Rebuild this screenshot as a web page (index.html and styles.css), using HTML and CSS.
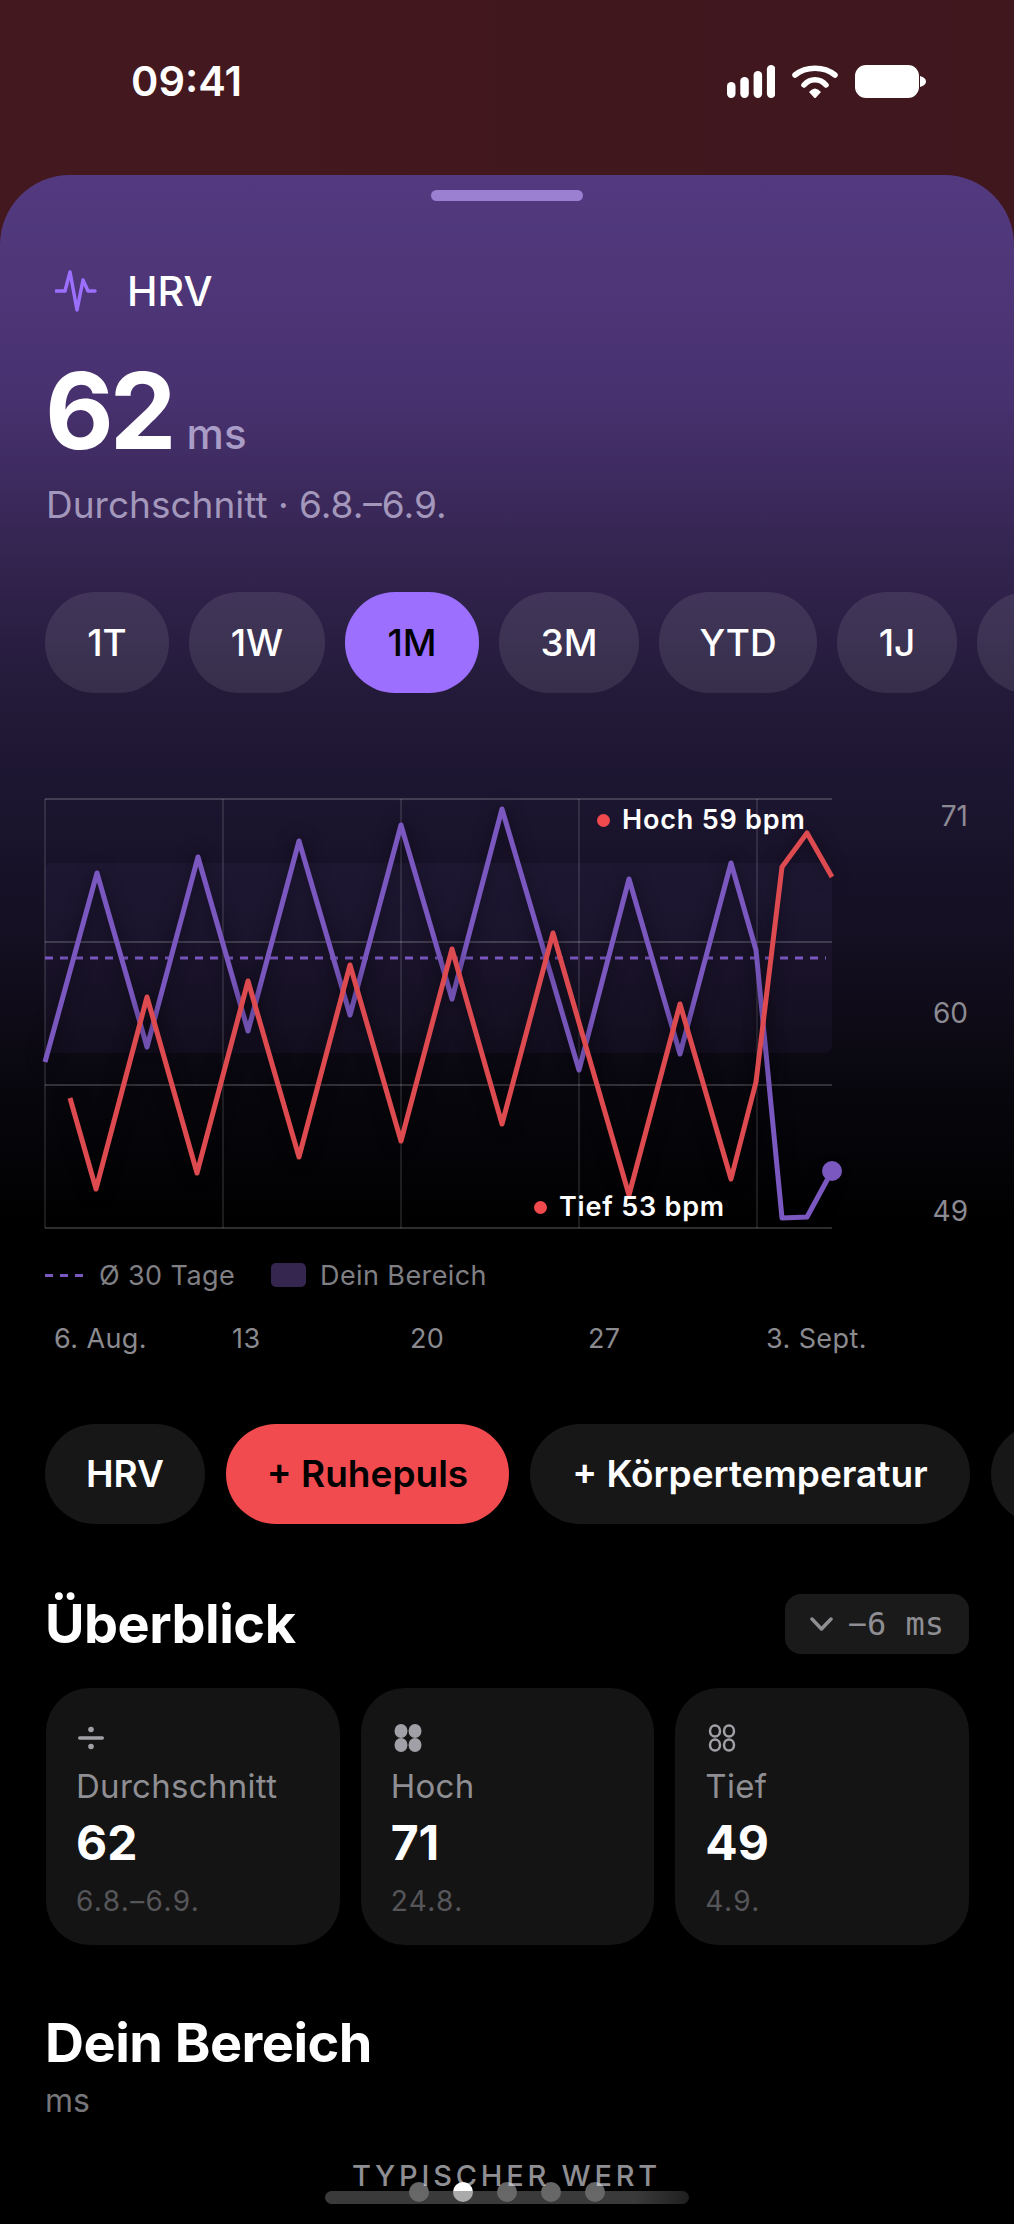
FILE: index.html
```html
<!DOCTYPE html>
<html lang="de">
<head>
    <meta charset="UTF-8">
    <meta name="viewport" content="width=device-width, initial-scale=1.0">
    <title>HRV</title>
    <link rel="stylesheet" href="styles.css">
</head>
<body>
    <div class="top">
        <div class="status-bar">
            <span class="time">09:41</span>
            <div class="status-icons">
                <svg width="48" height="33" viewBox="0 0 48 33" fill="#fff"><rect x="0" y="17" width="8.5" height="16" rx="4.2"/><rect x="13.3" y="12" width="8.5" height="21" rx="4.2"/><rect x="26.6" y="6" width="8.5" height="27" rx="4.2"/><rect x="39.9" y="0" width="8.5" height="33" rx="4.2"/></svg>
                <svg width="46" height="34" viewBox="0 0 46 34" fill="none" stroke="#fff" stroke-width="5.5" stroke-linecap="round"><path d="M3 10C14 1 32 1 43 10"/><path d="M12 20C18 13 28 13 34 20"/><path d="M17 27Q23 20 29 27L24 32.5Q23 33.5 22 32.5Z" fill="#fff" stroke="none"/></svg>
                <svg width="71" height="33" viewBox="0 0 71 33" fill="#fff"><rect x="0" y="0" width="64" height="33" rx="11"/><path d="M65 11C69 12 71 14 71 16.5C71 19 69 21 65 22Z"/></svg>
            </div>
        </div>

        <div class="sheet">
            <div class="handle"></div>
            <div class="metric-title">
                <svg width="42" height="42" viewBox="0 0 42 42" fill="none" stroke="#9d6fff" stroke-width="3.5" stroke-linecap="round" stroke-linejoin="round"><path d="M1 21H10L15 2L22 40L28 10L33 21H40"/></svg>
                <span>HRV</span>
            </div>
            <div class="metric-value">
                <span class="big">62</span>
                <span class="unit">ms</span>
            </div>
            <p class="metric-sub">Durchschnitt · 6.8.–6.9.</p>

            <div class="pills">
                <div class="pill">1T</div>
                <div class="pill">1W</div>
                <div class="pill active">1M</div>
                <div class="pill">3M</div>
                <div class="pill">YTD</div>
                <div class="pill">1J</div>
                <div class="pill"></div>
            </div>

            <div class="chart">
                <svg class="plot" width="880" height="440" viewBox="45 799 880 440" fill="none">
                    <rect x="45" y="863" width="787" height="190" rx="6" fill="#a67dff" fill-opacity="0.05"/>
                    <g stroke="#fff" stroke-opacity="0.24" stroke-width="1.5">
                        <path d="M45 799H832M45 942H832M45 1085H832M45 1228H832"/>
                        <path d="M45 799V1228M223 799V1228M401 799V1228M579 799V1228M757 799V1228" stroke-opacity="0.15"/>
                    </g>
                    <path d="M45 958H826" stroke="#7a58c0" stroke-width="3" stroke-dasharray="8 7"/>
                    <path class="line" stroke="#7a58c0" d="M45 1062L97 873L147 1047L198 857L248 1031L299 841L350 1015L401 825L452 999L502 809L579 1070L629 879L680 1054L731 863L756 950L782 1218L807 1217L832 1171"/>
                    <circle cx="832" cy="1171" r="10" fill="#7a58c0"/>
                    <path class="line" stroke="#dd4a4f" d="M70 1098L96 1189L147 997L197 1173L248 981L299 1157L350 965L401 1141L452 949L502 1124L553 933L629 1195L680 1004L731 1179L756 1082L782 867L807 833L832 877"/>
                </svg>
                <div class="tag tag-high"><i></i>Hoch 59 bpm</div>
                <div class="tag tag-low"><i></i>Tief 53 bpm</div>
                <div class="y-label y-top">71</div>
                <div class="y-label y-mid">60</div>
                <div class="y-label y-low">49</div>
            </div>

            <div class="legend">
                <span class="dashes"><i></i><i></i><i></i></span>
                <span>Ø 30 Tage</span>
                <span class="swatch"></span>
                <span>Dein Bereich</span>
            </div>

            <div class="x-axis">
                <span>6. Aug.</span>
                <span>13</span>
                <span>20</span>
                <span>27</span>
                <span>3. Sept.</span>
            </div>
        </div>
    </div>

    <div class="content">
        <div class="chips">
            <div class="chip">HRV</div>
            <div class="chip red">+ Ruhepuls</div>
            <div class="chip">+ Körpertemperatur</div>
            <div class="chip"></div>
        </div>

        <div class="section-head">
            <h2>Überblick</h2>
            <div class="delta">
                <svg width="23" height="14" viewBox="0 0 23 14" fill="none" stroke="#8e8e93" stroke-width="3.5" stroke-linecap="round" stroke-linejoin="round"><path d="M2 2L11.5 12L21 2"/></svg>
                <span>−6 ms</span>
            </div>
        </div>

        <div class="cards">
            <div class="card">
                <svg class="card-icon" width="30" height="28" viewBox="0 0 30 28" fill="#a0a0a6"><circle cx="13" cy="5.5" r="2.8"/><rect x="0" y="12.3" width="26" height="3.4" rx="1.7"/><circle cx="13" cy="22.5" r="2.8"/></svg>
                <div class="card-label">Durchschnitt</div>
                <div class="card-value">62</div>
                <div class="card-date">6.8.–6.9.</div>
            </div>
            <div class="card">
                <svg class="card-icon" width="30" height="28" viewBox="0 0 30 28" fill="#a0a0a6"><ellipse cx="8" cy="7" rx="6.5" ry="7"/><ellipse cx="22" cy="7" rx="6.5" ry="7"/><ellipse cx="8" cy="21" rx="6.5" ry="7"/><ellipse cx="22" cy="21" rx="6.5" ry="7"/></svg>
                <div class="card-label">Hoch</div>
                <div class="card-value">71</div>
                <div class="card-date">24.8.</div>
            </div>
            <div class="card">
                <svg class="card-icon" width="30" height="28" viewBox="0 0 30 28" fill="none" stroke="#a0a0a6" stroke-width="2.5"><ellipse cx="8" cy="7" rx="5" ry="5.5"/><ellipse cx="22" cy="7" rx="5" ry="5.5"/><ellipse cx="8" cy="21" rx="5" ry="5.5"/><ellipse cx="22" cy="21" rx="5" ry="5.5"/></svg>
                <div class="card-label">Tief</div>
                <div class="card-value">49</div>
                <div class="card-date">4.9.</div>
            </div>
        </div>

        <h2 class="range-title">Dein Bereich</h2>
        <div class="range-unit">ms</div>
        <div class="range-caption">TYPISCHER WERT</div>
        <div class="range-value">62</div>
    </div>

    <div class="page-dots">
        <i></i><i class="on"></i><i></i><i></i><i></i>
    </div>
    <div class="home-bar"></div>
</body>
</html>
```

FILE: styles.css
```css
* {
    box-sizing: border-box;
    font-family: 'Inter', 'Liberation Sans', sans-serif;
}
html, body {
    margin: 0;
    height: 2224px;
    overflow: hidden;
}
body {
    position: relative;
    background: #000;
    color: #fff;
}
.top {
    background: linear-gradient(90deg, #44181f, #3f171d) 0 0 / 100% 300px no-repeat;
}
.status-bar {
    height: 175px;
    padding: 60px 88px 0 131px;
    display: flex;
    justify-content: space-between;
    align-items: flex-start;
}
.time {
    font-size: 41.5px;
    font-weight: 600;
    line-height: 42px;
}
.status-icons {
    display: flex;
    align-items: flex-start;
    gap: 17px;
    padding-top: 5px;
}

.sheet {
    height: 1190px;
    padding: 15px 0 0 45px;
    border-radius: 70px 70px 0 0;
    background: linear-gradient(#533a80 0, #48316f 225px, #33244f 385px, #221a38 525px, #1c1530 625px, #100c1a 825px, #07060c 925px, #000 1055px);
    overflow: hidden;
}
.handle {
    width: 152px;
    height: 11px;
    margin-left: 386px;
    border-radius: 6px;
    background: #9b7fd0;
}
.metric-title {
    display: flex;
    align-items: center;
    gap: 30px;
    margin: 69px 0 0 10px;
    height: 42px;
    font-size: 41px;
    font-weight: 500;
}
.metric-value {
    display: flex;
    align-items: baseline;
    gap: 14px;
    margin-top: 53px;
    height: 92px;
    line-height: 92px;
}
.big {
    font-size: 106px;
    font-weight: 700;
    letter-spacing: -4px;
}
.unit {
    font-size: 42px;
    font-weight: 500;
    color: #a99cc6;
}
.metric-sub {
    margin: 26px 0 0 1px;
    font-size: 37px;
    line-height: 44px;
    color: #a398bc;
}

.pills {
    display: grid;
    grid-template-columns: 124px 136px 134px 140px 158px 120px 120px;
    gap: 20px;
    margin-top: 65px;
    width: 1100px;
}
.pill {
    height: 101px;
    border-radius: 50px;
    background: rgba(255, 255, 255, .09);
    font-size: 37px;
    font-weight: 500;
    line-height: 101px;
    text-align: center;
}
.pill.active {
    background: #9d6fff;
    color: #000;
}

.chart {
    position: relative;
    height: 440px;
    margin-top: 106px;
}
.plot {
    display: block;
    overflow: visible;
}
.line {
    stroke-width: 5;
    stroke-linejoin: round;
    filter: drop-shadow(0 0 8px rgba(0, 0, 0, .5));
}
.tag {
    position: absolute;
    display: flex;
    align-items: center;
    gap: 12px;
    font-size: 27px;
    font-weight: 600;
    letter-spacing: .8px;
    line-height: 32px;
}
.tag i {
    width: 13px;
    height: 13px;
    border-radius: 50%;
    background: #f04a4e;
}
.tag-high {
    left: 552px;
    top: 5px;
}
.tag-low {
    left: 489px;
    top: 392px;
}
.y-label {
    position: absolute;
    left: 834px;
    width: 89px;
    text-align: right;
    font-size: 28px;
    line-height: 34px;
    color: #8c8a92;
}
.y-top { top: 0; }
.y-mid { top: 197px; }
.y-low { top: 395px; }

.legend {
    display: flex;
    align-items: center;
    height: 34px;
    margin-top: 19px;
    font-size: 27px;
    letter-spacing: .4px;
    color: #7f7f84;
}
.dashes {
    display: flex;
    gap: 7px;
    margin-right: 16px;
}
.dashes i {
    width: 8px;
    height: 3px;
    background: #7a58c0;
}
.swatch {
    width: 35px;
    height: 24px;
    margin: 0 14px 0 36px;
    border-radius: 5px;
    background: #352650;
}
.x-axis {
    display: grid;
    grid-template-columns: repeat(4, 178px) auto;
    height: 34px;
    margin-top: 30px;
    padding-left: 9px;
    font-size: 27px;
    letter-spacing: .4px;
    line-height: 34px;
    color: #8a8a8f;
}

.content {
    padding: 59px 0 0 45px;
}
.chips {
    display: grid;
    grid-template-columns: 160px 283px 440px 160px;
    gap: 21px;
    width: 1200px;
}
.chip {
    height: 100px;
    border-radius: 50px;
    background: #171717;
    font-size: 37px;
    font-weight: 600;
    line-height: 100px;
    text-align: center;
}
.chip.red {
    background: #f24b4f;
    color: #000;
}
.section-head {
    display: flex;
    justify-content: space-between;
    align-items: center;
    width: 924px;
    margin-top: 70px;
    height: 60px;
}
h2 {
    margin: 0;
    font-size: 54px;
    font-weight: 700;
    letter-spacing: -.5px;
    line-height: 60px;
}
.delta {
    display: flex;
    align-items: center;
    gap: 15px;
    height: 60px;
    padding: 0 25px;
    border-radius: 16px;
    background: #1a1a1a;
    color: #8e8e93;
}
.delta span {
    font-family: 'DejaVu Sans Mono', monospace;
    font-size: 32px;
}
.cards {
    display: flex;
    gap: 21px;
    width: 923px;
    margin: 34px 0 0 1px;
}
.card {
    flex: 1;
    height: 257px;
    padding: 36px 0 0 30px;
    border-radius: 44px;
    background: #141414;
}
.card-icon {
    display: block;
    margin-left: 2px;
}
.card-label {
    margin-top: 14px;
    font-size: 33px;
    letter-spacing: .3px;
    line-height: 40px;
    color: #8e8e93;
}
.card-value {
    margin-top: 9px;
    font-size: 48px;
    font-weight: 700;
    line-height: 56px;
}
.card-date {
    margin-top: 13px;
    font-size: 28px;
    line-height: 34px;
    letter-spacing: 1.4px;
    color: #56565a;
}
.range-title {
    margin-top: 68px;
}
.range-unit {
    margin-top: 8px;
    font-size: 32px;
    line-height: 40px;
    color: #77777b;
}
.range-caption {
    width: 923px;
    margin-top: 37px;
    text-align: center;
    font-size: 29px;
    font-weight: 500;
    letter-spacing: 3.8px;
    line-height: 36px;
    color: #8e8e93;
}
.range-value {
    width: 926px;
    margin-top: 20px;
    text-align: center;
    font-size: 56px;
    font-weight: 700;
    line-height: 72px;
}

/* overlays at the bottom of the screen */
.page-dots {
    position: absolute;
    left: 409px;
    top: 2182px;
    display: flex;
    gap: 24px;
}
.page-dots i {
    width: 20px;
    height: 20px;
    border-radius: 50%;
    background: rgba(255, 255, 255, .4);
}
.page-dots i.on {
    background: #fff;
}
.home-bar {
    position: absolute;
    left: 325px;
    top: 2191px;
    width: 364px;
    height: 13px;
    border-radius: 7px;
    background: linear-gradient(90deg, rgba(104, 104, 104, .56) 85%, rgba(104, 104, 104, .3));
}
```
